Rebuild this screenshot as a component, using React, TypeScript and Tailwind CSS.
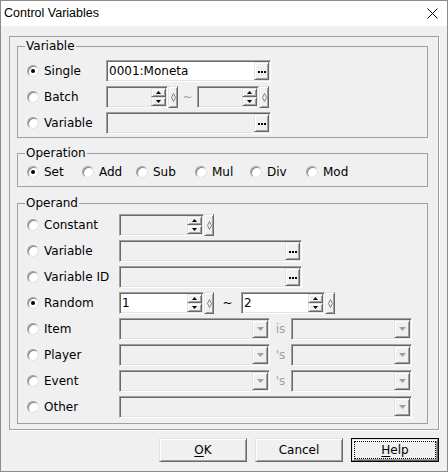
import React from 'react';

const raised =
  'border border-t-[#e3e3e3] border-l-[#e3e3e3] border-b-[#696969] border-r-[#696969] bg-[#f0f0f0] shadow-[inset_1px_1px_0_#fff,inset_-1px_-1px_0_#a0a0a0]';

const Radio: React.FC<{ checked?: boolean }> = ({ checked }) => (
  <span className="flex h-[12px] w-[12px] shrink-0 items-center justify-center rounded-full border border-t-[#a0a0a0] border-l-[#a0a0a0] border-b-[#e3e3e3] border-r-[#e3e3e3] bg-white shadow-[inset_1px_1px_0_#8a8a8a]">
    {checked && <span className="h-[4px] w-[4px] rounded-full bg-black" />}
  </span>
);

const Option: React.FC<{ label: string; checked?: boolean; className?: string }> = ({ label, checked, className }) => (
  <div className={`flex items-center gap-[5px] ${className ?? ''}`}>
    <Radio checked={checked} />
    <span>{label}</span>
  </div>
);

const Sunken: React.FC<{ className: string; white?: boolean; children?: React.ReactNode }> = ({ className, white, children }) => (
  <div
    className={`flex h-[22px] shrink-0 items-stretch border border-t-[#a0a0a0] border-l-[#a0a0a0] border-b-white border-r-white p-[1px] shadow-[inset_1px_1px_0_#696969,inset_-1px_-1px_0_#e3e3e3] ${
      white ? 'bg-white' : 'bg-[#f0f0f0]'
    } ${className}`}
  >
    {children}
  </div>
);

const Dots = () => (
  <span className={`ml-auto flex w-[15px] items-center justify-center gap-[1px] pt-[1px] ${raised}`}>
    <span className="h-[2px] w-[2px] bg-black" />
    <span className="h-[2px] w-[2px] bg-black" />
    <span className="h-[2px] w-[2px] bg-black" />
  </span>
);

const Value: React.FC<{ text?: string }> = ({ text }) => (
  <span className="flex items-center pl-[1px] leading-none">{text}</span>
);

const BrowseField: React.FC<{ className: string; white?: boolean; text?: string }> = ({ className, white, text }) => (
  <Sunken className={className} white={white}>
    <Value text={text} />
    <Dots />
  </Sunken>
);

const SpinField: React.FC<{ className: string; white?: boolean; text?: string }> = ({ className, white, text }) => (
  <div className="flex shrink-0">
    <Sunken className={className} white={white}>
      <Value text={text} />
      <span className="ml-auto flex w-[15px] flex-col">
        <span className={`flex flex-1 items-center justify-center ${raised}`}>
          <svg width="5" height="3" viewBox="0 0 5 3">
            <path d="M2.5 0 L5 3 L0 3 Z" fill="#000" />
          </svg>
        </span>
        <span className={`flex flex-1 items-center justify-center ${raised}`}>
          <svg width="5" height="3" viewBox="0 0 5 3">
            <path d="M0 0 H5 L2.5 3 Z" fill="#000" />
          </svg>
        </span>
      </span>
    </Sunken>
    <span className={`flex h-[22px] w-[10px] items-center justify-center ${raised}`}>
      <svg width="5" height="9" viewBox="0 0 5 9">
        <path d="M2.5 0.5 L4.5 4.5 L2.5 8.5 L0.5 4.5 Z" fill="none" stroke="#6a6a6a" strokeWidth="0.8" />
      </svg>
    </span>
  </div>
);

const Combo: React.FC<{ className: string }> = ({ className }) => (
  <Sunken className={className}>
    <span className={`ml-auto flex w-[16px] items-center justify-center ${raised}`}>
      <svg width="7" height="4" viewBox="0 0 7 4">
        <path d="M0 0 H7 L3.5 4 Z" fill="#a0a0a0" />
      </svg>
    </span>
  </Sunken>
);

const Group: React.FC<{ title: string; className: string; children: React.ReactNode }> = ({ title, className, children }) => (
  <fieldset className={`ml-[7px] w-[411px] border border-[#a0a0a0] px-0 ${className}`}>
    <legend className="ml-[7px] px-[1px] leading-[14px]">{title}</legend>
    {children}
  </fieldset>
);

const Btn: React.FC<{ children: React.ReactNode; focused?: boolean }> = ({ children, focused }) =>
  focused ? (
    <button className="flex h-[24px] w-[88px] border border-black bg-[#f0f0f0]">
      <span className={`flex h-full w-full p-[1px] ${raised}`}>
        <span className="flex flex-1 items-center justify-center border border-dotted border-black">{children}</span>
      </span>
    </button>
  ) : (
    <button className={`flex h-[24px] w-[88px] items-center justify-center ${raised}`}>{children}</button>
  );

export default function App() {
  return (
    <div className="flex h-[472px] w-[448px] flex-col border border-[#8c8c8c] bg-[#f0f0f0] font-['DejaVu_Sans',sans-serif] text-[12px] text-black">
      {/* Title bar */}
      <div className="flex h-[25px] shrink-0 items-center bg-white pl-[3px]">
        <span className="font-['Liberation_Sans',sans-serif] text-[12.5px]">Control Variables</span>
        <svg className="ml-auto mr-[9px]" width="11" height="11" viewBox="0 0 11 11">
          <path d="M0.5 0.5 L10.5 10.5 M10.5 0.5 L0.5 10.5" stroke="#000" strokeWidth="1" />
        </svg>
      </div>

      {/* Panel */}
      <div className="ml-[8px] mt-[10px] h-[394px] w-[430px] border border-[#a0a0a0] shadow-[1px_1px_0_#fff]">
        <Group title="Variable" className="mt-[2px]">
          <div className="flex flex-col gap-[4px] pb-[3px] pl-[9px] pt-[7px]">
            <div className="flex h-[22px] items-center">
              <Option label="Single" checked className="w-[79px]" />
              <BrowseField className="w-[165px]" white text="0001:Moneta" />
            </div>
            <div className="flex h-[22px] items-center">
              <Option label="Batch" className="w-[79px]" />
              <SpinField className="w-[62px]" />
              <span className="w-[19px] text-center text-[#a0a0a0]">~</span>
              <SpinField className="w-[62px]" />
            </div>
            <div className="flex h-[22px] items-center">
              <Option label="Variable" className="w-[79px]" />
              <BrowseField className="w-[165px]" />
            </div>
          </div>
        </Group>

        <Group title="Operation" className="mt-[8px]">
          <div className="mb-[7px] mt-[5px] flex h-[14px] items-center pl-[9px]">
            <Option label="Set" checked className="w-[55px]" />
            <Option label="Add" className="w-[54px]" />
            <Option label="Sub" className="w-[59px]" />
            <Option label="Mul" className="w-[55px]" />
            <Option label="Div" className="w-[56px]" />
            <Option label="Mod" />
          </div>
        </Group>

        <Group title="Operand" className="mt-[9px]">
          <div className="flex flex-col gap-[4px] pb-[5px] pl-[9px] pt-[4px]">
            <div className="flex h-[22px] items-center">
              <Option label="Constant" className="w-[92px]" />
              <SpinField className="w-[85px]" />
            </div>
            <div className="flex h-[22px] items-center">
              <Option label="Variable" className="w-[92px]" />
              <BrowseField className="w-[183px]" />
            </div>
            <div className="flex h-[22px] items-center">
              <Option label="Variable ID" className="w-[92px]" />
              <BrowseField className="w-[183px]" />
            </div>
            <div className="flex h-[22px] items-center">
              <Option label="Random" checked className="w-[92px]" />
              <SpinField className="w-[85px]" white text="1" />
              <span className="w-[27px] text-center">~</span>
              <SpinField className="w-[84px]" white text="2" />
            </div>
            <div className="flex h-[22px] items-center">
              <Option label="Item" className="w-[92px]" />
              <Combo className="w-[151px]" />
              <span className="w-[21px] text-center text-[#a0a0a0]">is</span>
              <Combo className="w-[121px]" />
            </div>
            <div className="flex h-[22px] items-center">
              <Option label="Player" className="w-[92px]" />
              <Combo className="w-[151px]" />
              <span className="w-[21px] text-center text-[#a0a0a0]">'s</span>
              <Combo className="w-[121px]" />
            </div>
            <div className="flex h-[22px] items-center">
              <Option label="Event" className="w-[92px]" />
              <Combo className="w-[151px]" />
              <span className="w-[21px] text-center text-[#a0a0a0]">'s</span>
              <Combo className="w-[121px]" />
            </div>
            <div className="flex h-[22px] items-center">
              <Option label="Other" className="w-[92px]" />
              <Combo className="w-[293px]" />
            </div>
          </div>
        </Group>
      </div>

      {/* Buttons */}
      <div className="mt-[8px] flex justify-end gap-[8px] pr-[8px]">
        <Btn>
          <span className="underline underline-offset-[2px]">O</span>K
        </Btn>
        <Btn>Cancel</Btn>
        <Btn focused>
          <span className="underline underline-offset-[2px]">H</span>elp
        </Btn>
      </div>
    </div>
  );
}
